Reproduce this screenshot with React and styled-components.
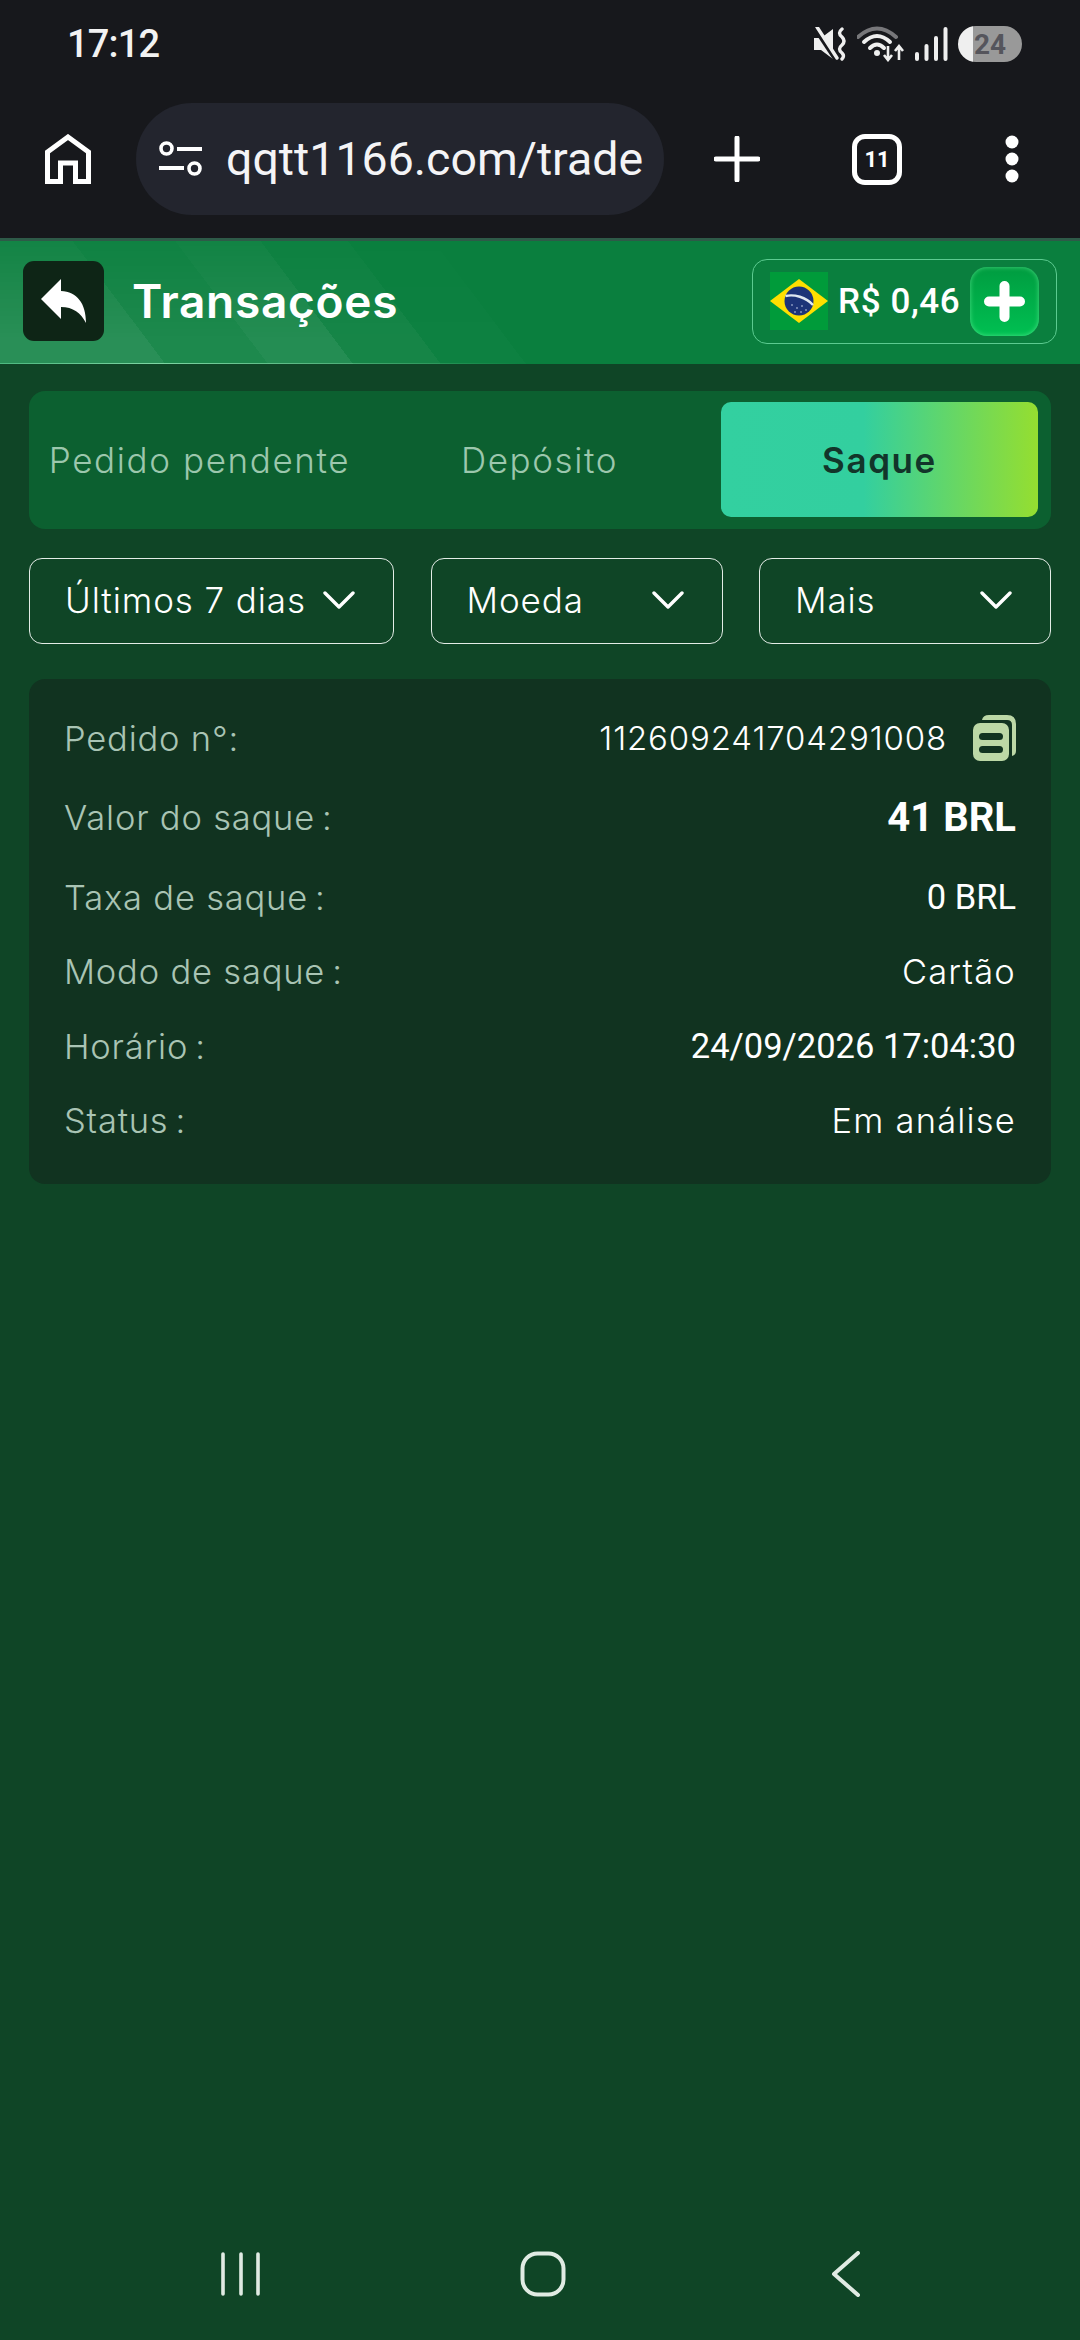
import React from 'react';
import styled, { createGlobalStyle } from 'styled-components';

const GlobalStyle = createGlobalStyle`
  html, body {
    margin: 0;
    padding: 0;
    background: #0f4526;
  }
  * {
    box-sizing: border-box;
  }
`;

const sans = `Inter, "Noto Sans", sans-serif`;
const roboto = `Roboto, "Liberation Sans", sans-serif`;

const Page = styled.div`
  width: 1080px;
  height: 2340px;
  display: flex;
  flex-direction: column;
  background: #0f4526;
  color: #fff;
  font-family: ${sans};
  overflow: hidden;
`;

/* phone + browser chrome */
const Chrome = styled.div`
  height: 241px;
  flex-shrink: 0;
  background: #17181c;
  border-bottom: 3px solid #2e5a48;
`;

const StatusBar = styled.div`
  height: 88px;
  display: flex;
  align-items: center;
  justify-content: space-between;
  padding: 0 58px 0 67px;
`;

const Clock = styled.span`
  font-family: ${roboto};
  font-size: 38px;
  font-weight: 500;
  letter-spacing: -0.8px;
  color: #f2f2f2;
`;

const StatusIcons = styled.div`
  display: flex;
  align-items: center;
  gap: 10px;
`;

const Battery = styled.div`
  width: 64px;
  height: 36px;
  border-radius: 18px;
  background: linear-gradient(90deg, #efefef 0 15px, #999 15px);
  color: #55555c;
  font-family: ${roboto};
  font-size: 28px;
  font-weight: 700;
  display: flex;
  align-items: center;
  justify-content: center;
`;

const BrowserBar = styled.div`
  height: 112px;
  margin-top: 15px;
  display: flex;
  align-items: center;
  padding: 0 0 0 45px;
`;

const AddressBar = styled.div`
  width: 528px;
  height: 112px;
  margin-left: 45px;
  border-radius: 56px;
  background: #23252e;
  display: flex;
  align-items: center;
  gap: 24px;
  padding-left: 23px;
  overflow: hidden;
`;

const Url = styled.span`
  font-family: ${roboto};
  font-size: 46.5px;
  color: #f4f4f6;
  white-space: nowrap;
`;

const TabCount = styled.div`
  width: 50px;
  height: 51px;
  margin-left: 92px;
  border: 5px solid #fff;
  border-radius: 13px;
  display: flex;
  align-items: center;
  justify-content: center;
  font-family: ${roboto};
  font-size: 22px;
  font-weight: 700;
  color: #fff;
`;

const PlusWrap = styled.div`
  margin-left: 50px;
  display: flex;
`;

const MenuWrap = styled.div`
  margin-left: 103px;
  display: flex;
`;

/* site header */
const Header = styled.header`
  position: relative;
  height: 123px;
  flex-shrink: 0;
  display: flex;
  align-items: center;
  padding: 0 23px 3px;
  background: #0a7f3e;
  overflow: hidden;

  &::before {
    content: '';
    position: absolute;
    inset: 0;
    background: linear-gradient(
      53deg,
      rgba(255, 255, 255, 0.13) 0 132px,
      rgba(255, 255, 255, 0.08) 132px 214px,
      rgba(255, 255, 255, 0.11) 214px 282px,
      rgba(255, 255, 255, 0.05) 282px 352px,
      rgba(255, 255, 255, 0.015) 352px 420px,
      transparent 420px
    );
    -webkit-mask-image: linear-gradient(0deg, #000 20%, rgba(0, 0, 0, 0.3) 100%);
    mask-image: linear-gradient(0deg, #000 20%, rgba(0, 0, 0, 0.3) 100%);
  }

  &::after {
    content: '';
    position: absolute;
    left: 0;
    bottom: 0;
    width: 520px;
    height: 1px;
    background: linear-gradient(90deg, #4db980, #7fd6a4 30%, transparent);
  }
`;

const BackButton = styled.button`
  position: relative;
  width: 81px;
  height: 80px;
  padding: 0;
  border: none;
  border-radius: 11px;
  background: #0e2516;
  display: flex;
  align-items: center;
  justify-content: center;
`;

const Title = styled.h1`
  position: relative;
  margin: 0 0 0 28px;
  font-size: 46px;
  font-weight: 600;
  letter-spacing: 0.7px;
  color: #fff;
  flex: 1;
`;

const Balance = styled.div`
  position: relative;
  width: 305px;
  height: 85px;
  border: 1px solid #5ccb90;
  border-radius: 15px;
  display: flex;
  align-items: center;
  padding-left: 17px;
`;

const BalanceText = styled.span`
  margin-left: 10px;
  font-family: ${roboto};
  font-size: 35px;
  font-weight: 500;
  letter-spacing: 0.6px;
  color: #fff;
  white-space: nowrap;
`;

const AddButton = styled.button`
  width: 69px;
  height: 69px;
  margin-left: auto;
  margin-right: 17px;
  padding: 0;
  border: none;
  border-radius: 17px;
  background: linear-gradient(180deg, #009c40 0%, #00c052 100%);
  box-shadow: inset 0 0 5px rgba(120, 255, 170, 0.6);
  display: flex;
  align-items: center;
  justify-content: center;
`;

/* content */
const Content = styled.main`
  flex: 1;
  display: flex;
  flex-direction: column;
  padding: 27px 29px 0;
`;

const TabPanel = styled.div`
  height: 138px;
  display: grid;
  grid-template-columns: repeat(3, 317px);
  column-gap: 23px;
  padding: 11px 12px 12px;
  border-radius: 16px;
  background: #0c6030;
`;

const Tab = styled.div`
  display: flex;
  align-items: center;
  justify-content: center;
  border-radius: 10px;
  font-size: 35px;
  font-weight: ${(p) => (p.$active ? 600 : 300)};
  letter-spacing: 1.6px;
  color: ${(p) => (p.$active ? '#12352a' : '#9cc7ad')};
  background: ${(p) =>
    p.$active ? 'linear-gradient(90deg, #33d0a0 0%, #33cf9f 45%, #95de30 100%)' : 'transparent'};
  white-space: nowrap;
`;

const Filters = styled.div`
  display: flex;
  justify-content: space-between;
  margin-top: 29px;
`;

const Filter = styled.div`
  width: ${(p) => p.$width}px;
  height: 86px;
  border: 1px solid #e3ece6;
  border-radius: 13px;
  display: flex;
  align-items: center;
  justify-content: space-between;
  padding: 0 38px 3px 35px;
  font-size: 35px;
  font-weight: 300;
  letter-spacing: 0.9px;
  color: #fff;
  white-space: nowrap;
`;

const Card = styled.section`
  height: 505px;
  margin-top: 35px;
  padding: 34px 35px 0;
  border-radius: 16px;
  background: #113320;
`;

const Row = styled.div`
  height: 50px;
  margin-top: ${(p) => p.$top || 0}px;
  display: flex;
  align-items: center;
  justify-content: space-between;
`;

const Label = styled.span`
  font-size: 34.5px;
  font-weight: 300;
  letter-spacing: 0.8px;
  color: #a9c4b4;
`;

const Value = styled.span`
  display: flex;
  align-items: center;
  gap: 26px;
  font-size: ${(p) => (p.$code ? 33 : 34.5)}px;
  font-weight: 300;
  letter-spacing: ${(p) => (p.$code ? 0.85 : 1.2)}px;
  color: #fff;
`;

const NumValue = styled.span`
  font-family: ${roboto};
  font-size: ${(p) => (p.$strong ? 40 : 34.5)}px;
  font-weight: ${(p) => (p.$strong ? 700 : 400)};
  color: #fff;
`;

/* android navigation */
const NavBar = styled.nav`
  height: 44px;
  margin-bottom: 44px;
  flex-shrink: 0;
  display: flex;
  align-items: center;
  padding-left: 221px;
`;

const NavHome = styled.div`
  margin-left: 259px;
  display: flex;
`;

const NavBack = styled.div`
  margin-left: 265px;
  display: flex;
`;

const BrazilFlag = () => (
  <svg width="58" height="58" viewBox="0 0 58 58">
    <rect width="58" height="58" fill="#009b3a" />
    <polygon points="29,7 58,29 29,51 0,29" fill="#fedf00" />
    <circle cx="29" cy="29" r="14.5" fill="#1c3478" />
    <path d="M15.5 24 C24 22 36 25 43 33" fill="none" stroke="#dfe8f0" strokeWidth="2.4" />
    <g fill="#cfd8f0">
      <circle cx="22" cy="33" r="0.8" />
      <circle cx="27" cy="36" r="0.8" />
      <circle cx="32" cy="34" r="0.8" />
      <circle cx="36" cy="38" r="0.8" />
      <circle cx="25" cy="40" r="0.8" />
      <circle cx="31" cy="40" r="0.8" />
    </g>
  </svg>
);

const CopyIcon = () => (
  <svg width="43" height="46" viewBox="0 0 43 46">
    <path
      d="M9 5 Q10 0 16 0 H34 Q43 0 43 9 V36 Q43 40 39 41 V10 Q39 5 34 5 Z"
      fill="#bcd8a6"
    />
    <rect x="0" y="8" width="36" height="38" rx="7" fill="#bcd8a6" />
    <rect x="6" y="18" width="24" height="7" rx="3.5" fill="#113320" />
    <rect x="6" y="31" width="24" height="7" rx="3.5" fill="#113320" />
  </svg>
);

const Chevron = () => (
  <svg width="32" height="20" viewBox="0 0 32 20">
    <path d="M2 3 L16 17 L30 3" fill="none" stroke="#fff" strokeWidth="3.4" strokeLinecap="round" strokeLinejoin="round" />
  </svg>
);

const rows = [
  { label: 'Pedido n°:', value: '112609241704291008', copy: true },
  { label: 'Valor do saque\u2009:', value: '41 BRL', num: true, strong: true, top: 29 },
  { label: 'Taxa de saque\u2009:', value: '0 BRL', num: true, top: 30 },
  { label: 'Modo de saque\u2009:', value: 'Cartão', top: 24 },
  { label: 'Horário\u2009:', value: '24/09/2026 17:04:30', num: true, top: 25 },
  { label: 'Status\u2009:', value: 'Em análise', top: 24 },
];

const App = () => (
  <Page>
    <GlobalStyle />
    <Chrome>
      <StatusBar>
        <Clock>17:12</Clock>
        <StatusIcons>
          <svg width="33" height="34" viewBox="0 0 33 34">
            <path d="M0 11 H7 L19 2 V32 L7 23 H0 Z" fill="#efefef" />
            <path d="M1 1 L21 31" stroke="#17181c" strokeWidth="5" />
            <path d="M3 0 L23 31" stroke="#efefef" strokeWidth="3.4" strokeLinecap="round" />
            <path d="M28 2 Q23 6 28 10 Q32 14 28 18 Q23 22 28 26 Q31 29 28 32" fill="none" stroke="#efefef" strokeWidth="3.4" strokeLinecap="round" />
          </svg>
          <svg width="48" height="36" viewBox="0 0 48 36">
            <path d="M1 11 Q20 -6 39 11" fill="none" stroke="#77777a" strokeWidth="4" strokeLinecap="round" />
            <path d="M7 16 Q20 4 33 16" fill="none" stroke="#efefef" strokeWidth="4" strokeLinecap="round" />
            <path d="M13 22 Q20 15 27 22" fill="none" stroke="#efefef" strokeWidth="4" strokeLinecap="round" />
            <circle cx="20" cy="27" r="3" fill="#efefef" />
            <path d="M31 20 V33 M27 29 L31 34 L35 29" fill="none" stroke="#efefef" strokeWidth="2.6" />
            <path d="M42 34 V21 M38 25 L42 20 L46 25" fill="none" stroke="#efefef" strokeWidth="2.6" />
          </svg>
          <svg width="33" height="34" viewBox="0 0 33 34">
            <rect x="0" y="25" width="4" height="9" rx="2" fill="#efefef" />
            <rect x="9.5" y="17" width="4" height="17" rx="2" fill="#efefef" />
            <rect x="19" y="9" width="4" height="25" rx="2" fill="#efefef" />
            <rect x="28.5" y="0" width="4" height="34" rx="2" fill="#efefef" />
          </svg>
          <Battery>24</Battery>
        </StatusIcons>
      </StatusBar>
      <BrowserBar>
        <svg width="46" height="50" viewBox="0 0 46 50">
          <path d="M2.5 47.5 V18 L23 3 L43.5 18 V47.5 H30.5 V29 H15.5 V47.5 Z" fill="none" stroke="#fff" strokeWidth="5" />
        </svg>
        <AddressBar>
          <svg width="43" height="36" viewBox="0 0 43 36">
            <circle cx="7.5" cy="7.5" r="5.5" fill="none" stroke="#fff" strokeWidth="3.6" />
            <rect x="18" y="6" width="25" height="4" fill="#fff" />
            <rect x="0" y="25" width="25" height="4" fill="#fff" />
            <circle cx="35.5" cy="27.5" r="5.5" fill="none" stroke="#fff" strokeWidth="3.6" />
          </svg>
          <Url>qqtt1166.com/trade</Url>
        </AddressBar>
        <PlusWrap>
          <svg width="46" height="46" viewBox="0 0 46 46">
            <path d="M23 2 V44 M2 23 H44" stroke="#fff" strokeWidth="5" strokeLinecap="round" />
          </svg>
        </PlusWrap>
        <TabCount>11</TabCount>
        <MenuWrap>
          <svg width="14" height="48" viewBox="0 0 14 48">
            <circle cx="7" cy="7" r="6.5" fill="#fff" />
            <circle cx="7" cy="24" r="6.5" fill="#fff" />
            <circle cx="7" cy="41" r="6.5" fill="#fff" />
          </svg>
        </MenuWrap>
      </BrowserBar>
    </Chrome>

    <Header>
      <BackButton>
        <svg width="46" height="44" viewBox="0 0 46 44">
          <path d="M20 0 L0 20 L20 40 V28 C32 28 40 34 45 44 C45 24 36 13 20 12 Z" fill="#fff" strokeLinejoin="round" />
        </svg>
      </BackButton>
      <Title>Transações</Title>
      <Balance>
        <BrazilFlag />
        <BalanceText>R$ 0,46</BalanceText>
        <AddButton>
          <svg width="41" height="41" viewBox="0 0 41 41">
            <path d="M20.5 5 V36 M5 20.5 H36" stroke="#fff" strokeWidth="10" strokeLinecap="round" />
          </svg>
        </AddButton>
      </Balance>
    </Header>

    <Content>
      <TabPanel>
        <Tab>Pedido pendente</Tab>
        <Tab>Depósito</Tab>
        <Tab $active>Saque</Tab>
      </TabPanel>

      <Filters>
        <Filter $width={365}>Últimos 7 dias<Chevron /></Filter>
        <Filter $width={292}>Moeda<Chevron /></Filter>
        <Filter $width={292}>Mais<Chevron /></Filter>
      </Filters>

      <Card>
        {rows.map((r) => (
          <Row key={r.label} $top={r.top}>
            <Label>{r.label}</Label>
            {r.num ? (
              <NumValue $strong={r.strong}>{r.value}</NumValue>
            ) : (
              <Value $code={r.copy}>
                {r.value}
                {r.copy && <CopyIcon />}
              </Value>
            )}
          </Row>
        ))}
      </Card>
    </Content>

    <NavBar>
      <svg width="40" height="44" viewBox="0 0 40 44">
        <path d="M2 2 V42 M20 2 V42 M37 2 V42" stroke="#e0ebe3" strokeWidth="3.6" strokeLinecap="round" />
      </svg>
      <NavHome>
        <svg width="46" height="46" viewBox="0 0 46 46">
          <rect x="2.5" y="2.5" width="41" height="41" rx="15" fill="none" stroke="#e0ebe3" strokeWidth="4" />
        </svg>
      </NavHome>
      <NavBack>
        <svg width="30" height="46" viewBox="0 0 30 46">
          <path d="M27 2 L3 23 L27 44" fill="none" stroke="#e0ebe3" strokeWidth="4" strokeLinecap="round" strokeLinejoin="round" />
        </svg>
      </NavBack>
    </NavBar>
  </Page>
);

export default App;
